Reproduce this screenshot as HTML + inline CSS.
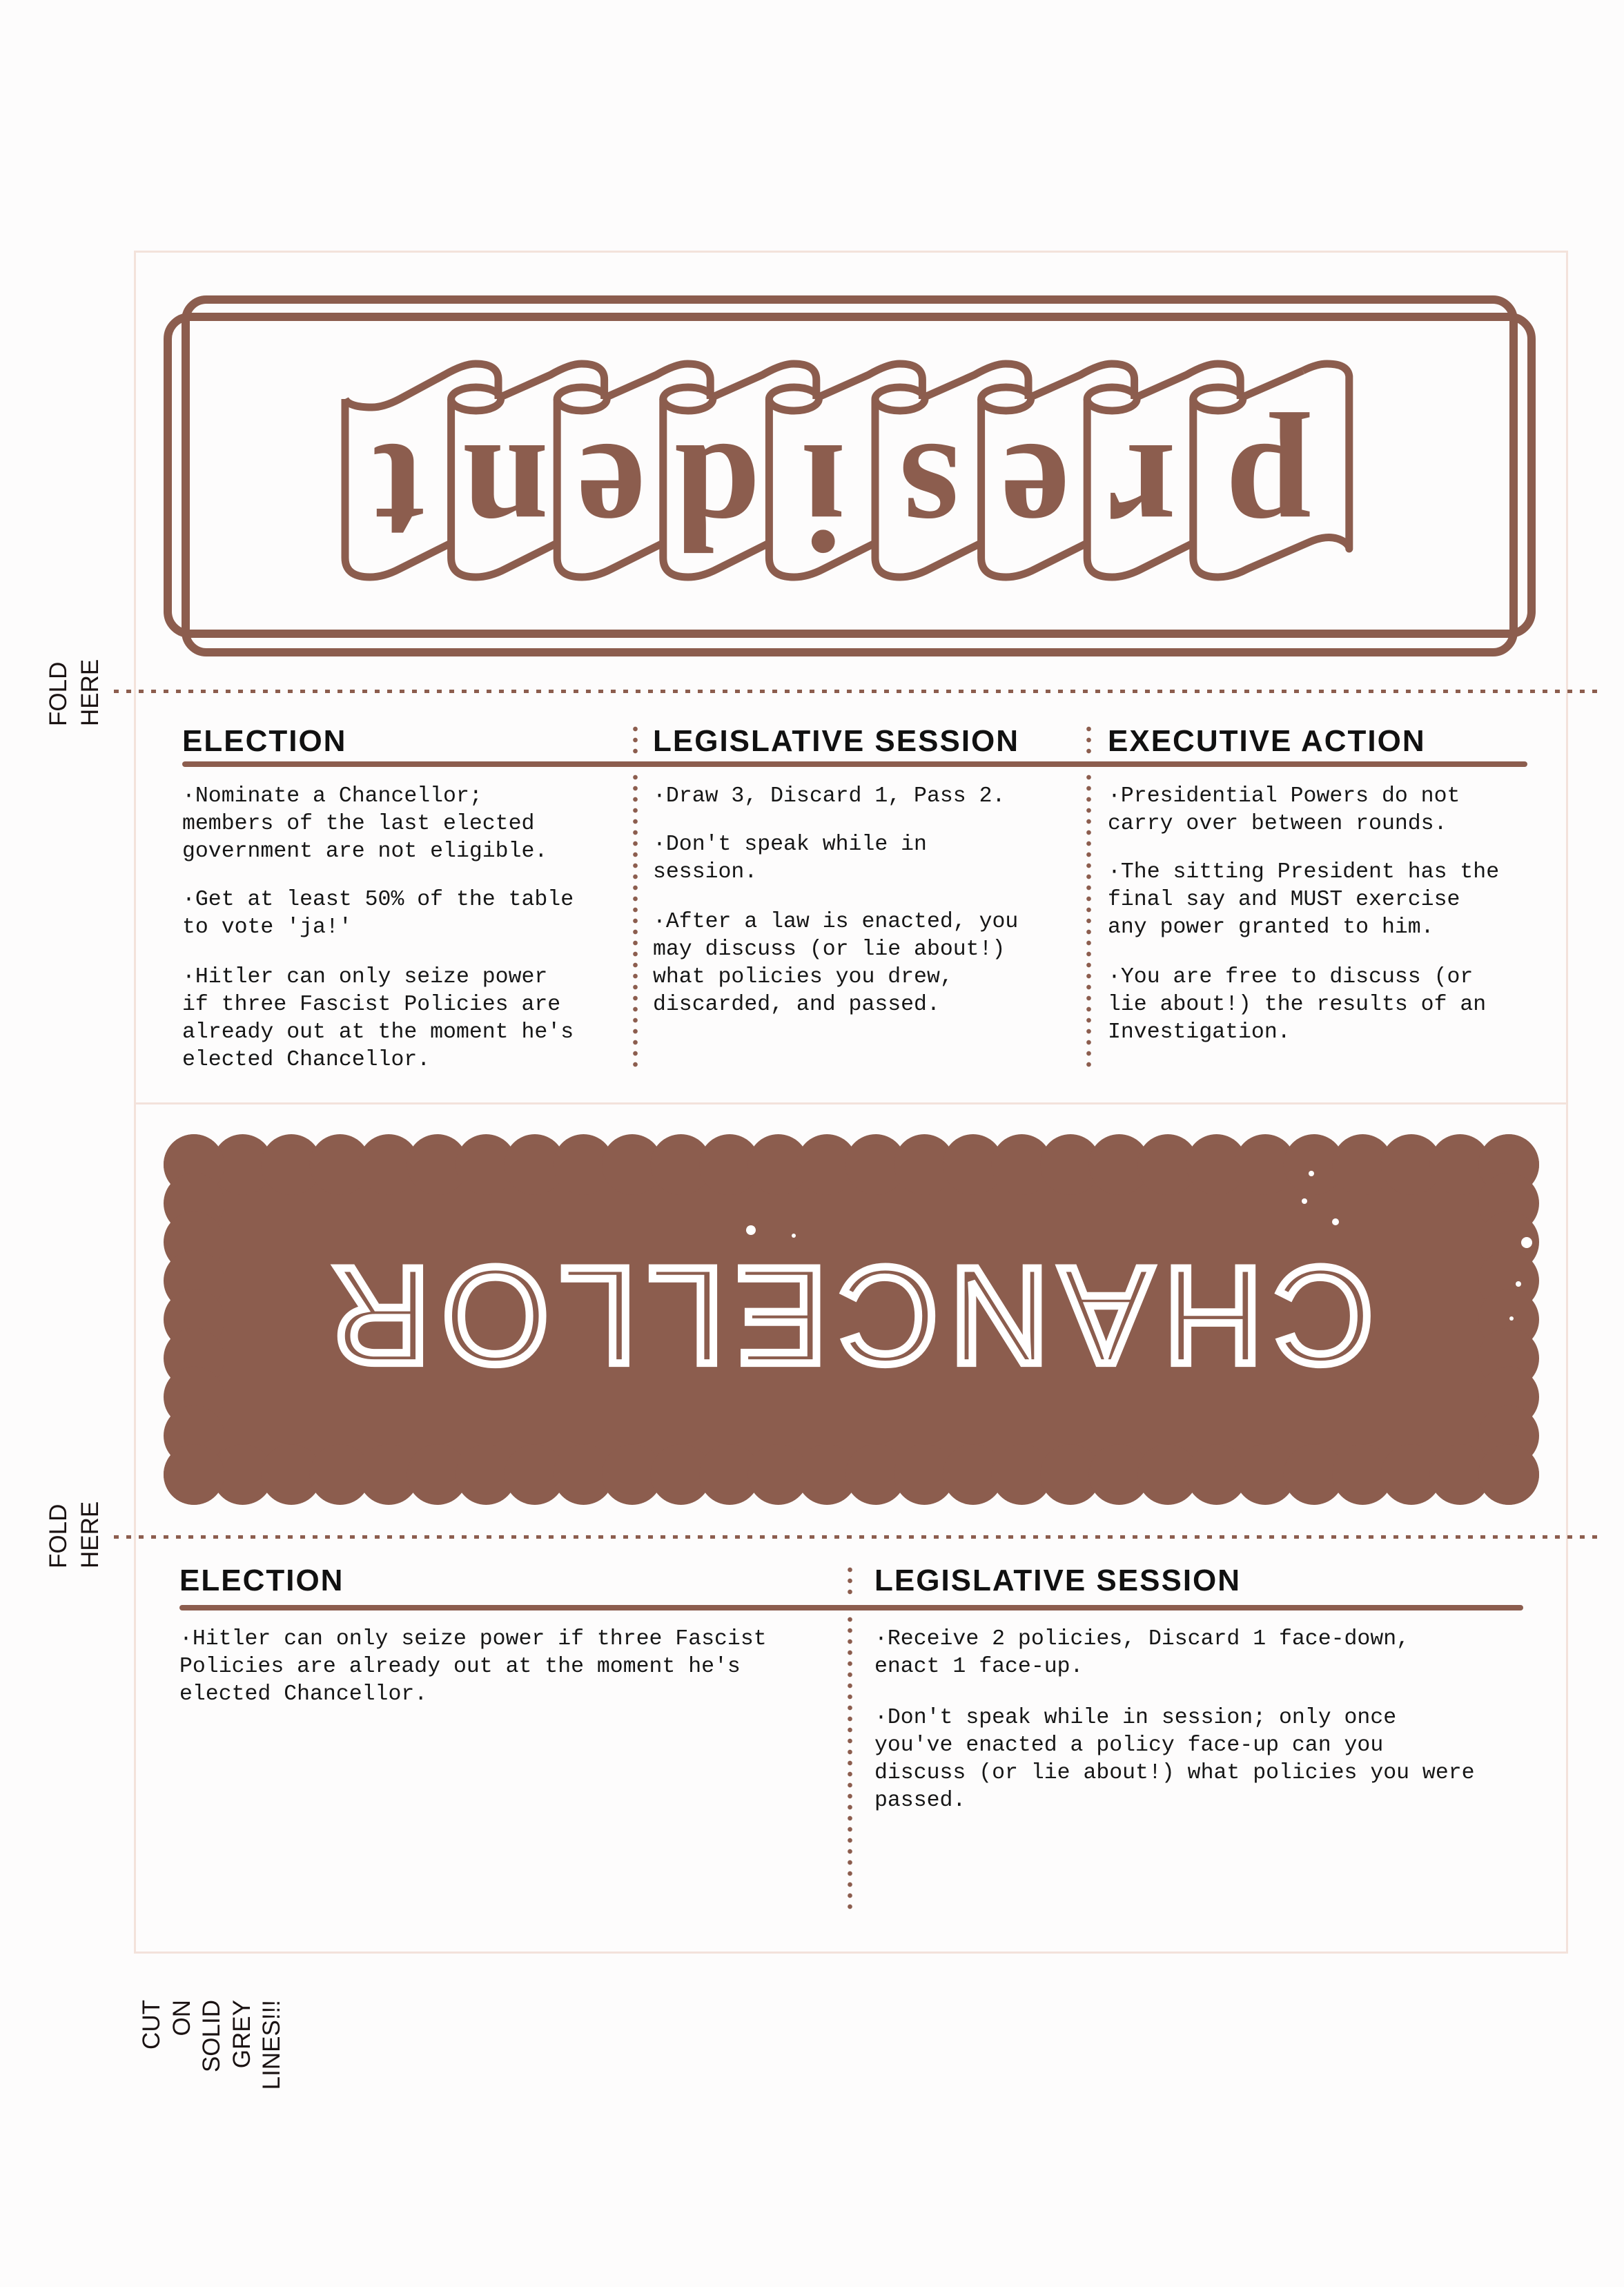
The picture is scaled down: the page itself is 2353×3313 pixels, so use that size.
<!DOCTYPE html>
<html><head><meta charset="utf-8"><style>
html,body{margin:0;padding:0}
body{width:2353px;height:3313px;background:#fdfcfc;position:relative;overflow:hidden;font-family:"Liberation Sans",sans-serif}
.abs{position:absolute}
.card{left:194px;top:363px;width:2078px;height:2467px;border:3px solid #f3e2db;box-sizing:border-box}
.hdiv{left:194px;top:1597px;width:2078px;height:3px;background:#f3e2db}
.fold{height:5px;background:repeating-linear-gradient(90deg,#8c5d4e 0 7px,transparent 7px 18px)}
.vsep{width:7px;background:radial-gradient(circle at 3.5px 4px,#8c5d4e 3px,transparent 3.6px);background-size:7px 16px}
.h{font-weight:bold;font-size:44px;letter-spacing:2px;color:#111;line-height:44px}
.ul{height:8px;background:#8c5d4e;border-radius:4px}
.p{font-family:"Liberation Mono",monospace;font-size:31.5px;line-height:40px;color:#161616;white-space:pre}
.rot{transform:rotate(-90deg);transform-origin:0 0;color:#1a1212;white-space:nowrap}
</style></head><body>
<div class="abs card"></div>
<div class="abs hdiv"></div>

<svg class="abs" style="left:0;top:0" width="2353" height="1000" viewBox="0 0 2353 1000">
 <g fill="none" stroke="#8c5d4e" stroke-width="12">
  <rect x="269" y="434" width="1924" height="511" rx="30"/>
  <rect x="243" y="459" width="1976" height="459" rx="32"/>
 </g>
 <g id="panels" fill="none" stroke="#8c5d4e" stroke-width="11" stroke-linejoin="round"></g>
 <g id="letters" fill="#8c5d4e" font-family="Liberation Serif,serif" font-weight="bold" font-size="225"></g>
</svg>

<div class="abs fold" style="left:165px;top:999px;width:2160px"></div>
<div class="abs rot" style="left:62px;top:1052px;font-size:35px;line-height:46px">FOLD<br>HERE</div>

<div class="abs h" style="left:264px;top:1052px">ELECTION</div>
<div class="abs h" style="left:946px;top:1052px">LEGISLATIVE SESSION</div>
<div class="abs h" style="left:1605px;top:1052px">EXECUTIVE ACTION</div>
<div class="abs ul" style="left:264px;top:1103px;width:1949px"></div>
<div class="abs vsep" style="left:917px;top:1052px;height:44px"></div>
<div class="abs vsep" style="left:917px;top:1122px;height:432px"></div>
<div class="abs vsep" style="left:1574px;top:1052px;height:44px"></div>
<div class="abs vsep" style="left:1574px;top:1122px;height:432px"></div>

<div class="abs p" style="left:264px;top:1134px">·Nominate a Chancellor;
members of the last elected
government are not eligible.</div>
<div class="abs p" style="left:264px;top:1284px">·Get at least 50% of the table
to vote 'ja!'</div>
<div class="abs p" style="left:264px;top:1396px">·Hitler can only seize power
if three Fascist Policies are
already out at the moment he's
elected Chancellor.</div>

<div class="abs p" style="left:946px;top:1134px">·Draw 3, Discard 1, Pass 2.</div>
<div class="abs p" style="left:946px;top:1204px">·Don't speak while in
session.</div>
<div class="abs p" style="left:946px;top:1316px">·After a law is enacted, you
may discuss (or lie about!)
what policies you drew,
discarded, and passed.</div>

<div class="abs p" style="left:1605px;top:1134px">·Presidential Powers do not
carry over between rounds.</div>
<div class="abs p" style="left:1605px;top:1244px">·The sitting President has the
final say and MUST exercise
any power granted to him.</div>
<div class="abs p" style="left:1605px;top:1396px">·You are free to discuss (or
lie about!) the results of an
Investigation.</div>

<svg class="abs" style="left:0;top:1600px" width="2353" height="600" viewBox="0 1600 2353 600">
 <g id="scal" fill="#8c5d4e"></g>
 <text x="1227" y="1985" text-anchor="middle" font-family="Liberation Sans,sans-serif" font-size="200" letter-spacing="16" fill="#8c5d4e" stroke="#ffffff" stroke-width="11" stroke-linejoin="miter" transform="rotate(180 1227 1911)">CHANCELLOR</text>
 <g fill="#fff"><circle cx="1088" cy="1782" r="7"/><circle cx="1150" cy="1790" r="3"/><circle cx="1900" cy="1700" r="4"/><circle cx="1890" cy="1740" r="4"/><circle cx="1935" cy="1770" r="5"/><circle cx="2212" cy="1800" r="8"/><circle cx="2200" cy="1860" r="4"/><circle cx="2190" cy="1910" r="3"/></g>
</svg>

<div class="abs fold" style="left:165px;top:2224px;width:2160px"></div>
<div class="abs rot" style="left:62px;top:2272px;font-size:35px;line-height:46px">FOLD<br>HERE</div>

<div class="abs h" style="left:260px;top:2268px">ELECTION</div>
<div class="abs h" style="left:1267px;top:2268px">LEGISLATIVE SESSION</div>
<div class="abs ul" style="left:260px;top:2325px;width:1947px"></div>
<div class="abs vsep" style="left:1228px;top:2270px;height:44px"></div>
<div class="abs vsep" style="left:1228px;top:2342px;height:432px"></div>

<div class="abs p" style="left:260px;top:2355px">·Hitler can only seize power if three Fascist
Policies are already out at the moment he's
elected Chancellor.</div>
<div class="abs p" style="left:1267px;top:2355px">·Receive 2 policies, Discard 1 face-down,
enact 1 face-up.</div>
<div class="abs p" style="left:1267px;top:2469px">·Don't speak while in session; only once
you've enacted a policy face-up can you
discuss (or lie about!) what policies you were
passed.</div>

<div class="abs rot" style="left:198px;top:3037px;width:140px;text-align:right;font-size:35px;line-height:43.5px">CUT<br>ON<br>SOLID<br>GREY<br>LINES!!!</div>

<script>
var NS="http://www.w3.org/2000/svg";
function el(p,t,a){var e=document.createElementNS(NS,t);for(var k in a)e.setAttribute(k,a[k]);p.appendChild(e);return e;}
var g=document.getElementById('scal');
var L=237,R=2230,T=1643,B=2180,r=44;
el(g,'rect',{x:L+20,y:T+20,width:R-L-40,height:B-T-40});
var nx=27;for(var i=0;i<=nx;i++){var cx=L+r+(R-L-2*r)*i/nx;el(g,'circle',{cx:cx,cy:T+r,r:r});el(g,'circle',{cx:cx,cy:B-r,r:r});}
var ny=8;for(var j=0;j<=ny;j++){var cy=T+r+(B-T-2*r)*j/ny;el(g,'circle',{cx:L+r,cy:cy,r:r});el(g,'circle',{cx:R-r,cy:cy,r:r});}
var pg=document.getElementById('panels'),lg=document.getElementById('letters');
var letters=["t","n","e","d","i","s","e","r","p"];
for(var i=0;i<9;i++){
 var x=494+153.6*i;
 var d="";
 d+="M"+(x+6)+",578 L"+(x+6)+",808 Q"+(x+6)+",836 "+(x+42)+",836 Q"+(x+62)+",836 "+(x+85)+",824 ";
 if(i<8){ d+="L"+(x+159)+",787 ";}
 else { d+="L"+(x+175)+",785 Q"+(x+205)+",772 "+(x+225)+",785 Q"+(x+232)+",790 "+(x+232)+",795 L"+(x+232)+",545 Q"+(x+230)+",527 "+(x+200)+",527 Q"+(x+185)+",527 "+(x+165)+",537 ";}
 el(pg,'path',{d:d});
 var t="";
 if(i==0){ t="M"+(x+6)+",578 Q"+(x+12)+",590 "+(x+45)+",590 Q"+(x+62)+",590 "+(x+85)+",578 L"+(x+150)+",543 Q"+(x+178)+",527 "+(x+195)+",527 Q"+(x+228)+",527 "+(x+228)+",550 L"+(x+228)+",578";}
 else{
  el(pg,'ellipse',{cx:x+42,cy:578,rx:36,ry:17});
  if(i<8) t="M"+(x+78)+",575 L"+(x+150)+",543 Q"+(x+178)+",527 "+(x+195)+",527 Q"+(x+228)+",527 "+(x+228)+",550 L"+(x+228)+",578";
  else t="M"+(x+78)+",575 L"+(x+165)+",537";
 }
 el(pg,'path',{d:t});
 var cx=(i<8)?x+85:x+115;
 var tx=el(lg,'text',{x:cx,y:765,'text-anchor':'middle',transform:'rotate(180 '+cx+' 705)'});
 tx.textContent=letters[i];
}
</script>
</body></html>
